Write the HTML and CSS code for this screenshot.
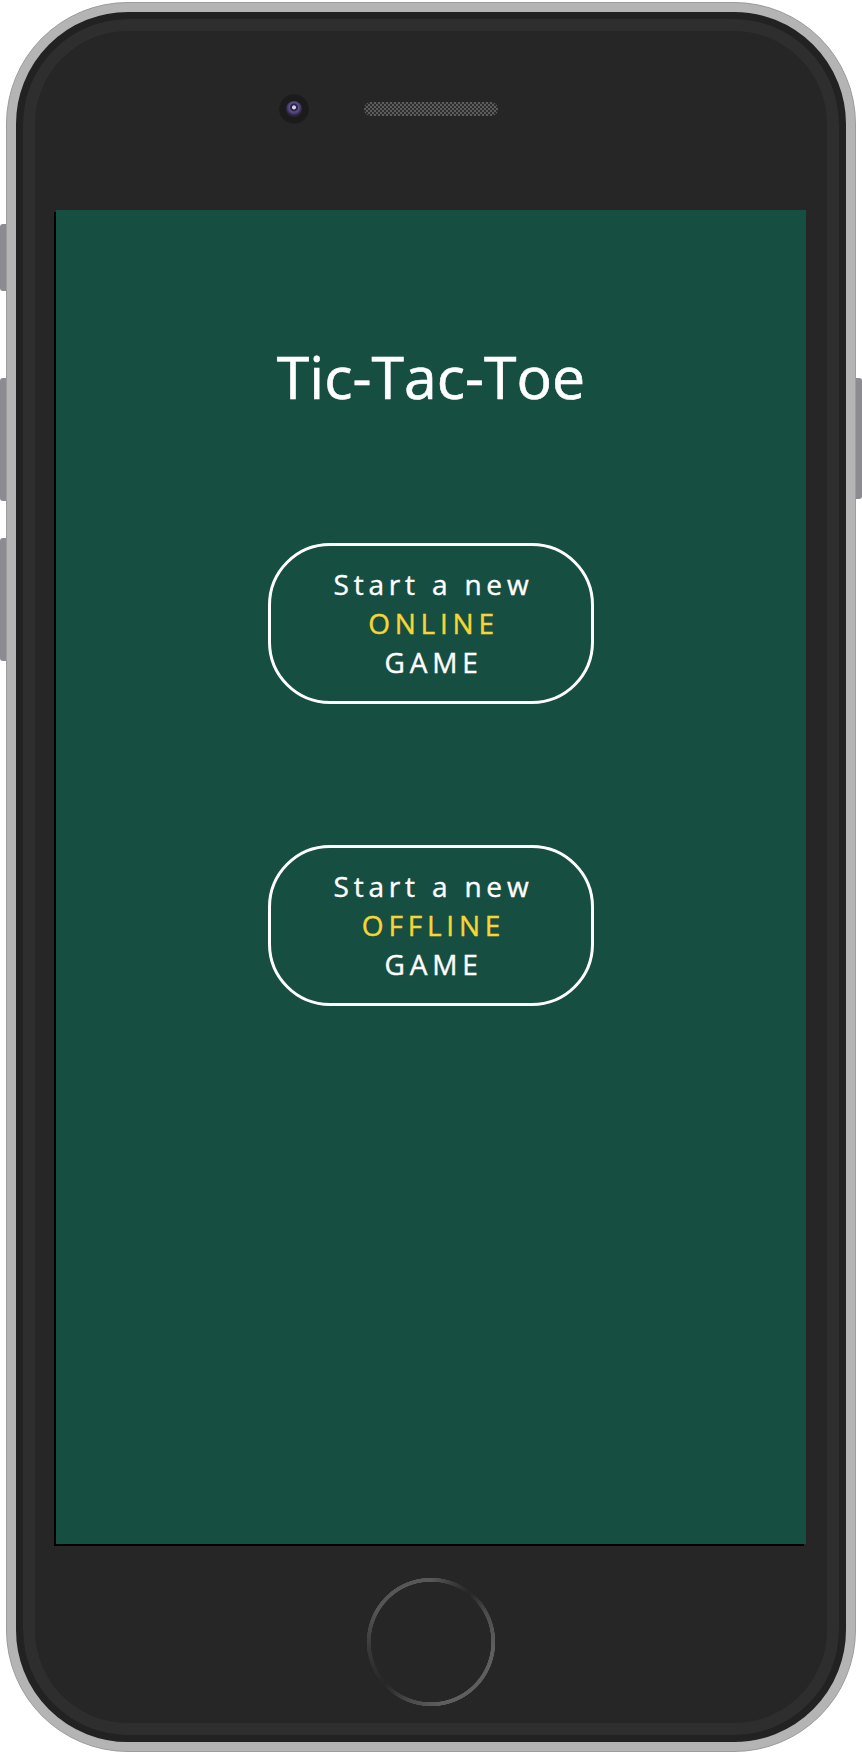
FILE: index.html
```html
<!DOCTYPE html>
<html lang="en">
<head>
<meta charset="utf-8">
<title>Tic-Tac-Toe</title>
<link rel="stylesheet" href="styles.css">
</head>
<body>
<div class="phone">
  <span class="side-btn side-l1"></span>
  <span class="side-btn side-l2"></span>
  <span class="side-btn side-l3"></span>
  <span class="side-btn side-r1"></span>
  <div class="body">
    <div class="top-bezel">
      <div class="cam-slot"><div class="cam"><div class="lens"></div></div></div>
      <div class="speaker"></div>
      <div></div>
    </div>
    <main class="screen">
      <h1 class="title">Tic-Tac-Toe</h1>
      <button class="mode-btn mode-online">
        <span class="line">Start a new</span>
        <span class="line accent">ONLINE</span>
        <span class="line">GAME</span>
      </button>
      <button class="mode-btn mode-offline">
        <span class="line">Start a new</span>
        <span class="line accent">OFFLINE</span>
        <span class="line">GAME</span>
      </button>
    </main>
    <div class="bottom-bezel"><div class="home"></div></div>
  </div>
</div>
</body>
</html>
```

FILE: styles.css
```css
html, body {
  margin: 0;
  padding: 0;
  background: #ffffff;
}

body {
  width: 862px;
  height: 1754px;
  overflow: hidden;
  font-family: "Comic Sans MS", "Open Sans", "DejaVu Sans", sans-serif;
}

.phone {
  position: relative;
  box-sizing: border-box;
  width: 850px;
  height: 1750px;
  margin: 2px 0 0 6px;
  padding: 9px;
  border: 1px solid #9c9c9c;
  border-radius: 122px;
  background: #b4b4b4;
}

.side-btn {
  position: absolute;
  width: 6px;
  background: #8b8b91;
}
.side-l1 { left: -7px; top: 221px; height: 67px; border-radius: 3px 0 0 3px; }
.side-l2 { left: -7px; top: 375px; height: 123px; border-radius: 3px 0 0 3px; }
.side-l3 { left: -7px; top: 535px; height: 123px; border-radius: 3px 0 0 3px; }
.side-r1 { right: -7px; top: 375px; height: 121px; border-radius: 0 3px 3px 0; }

.body {
  box-sizing: border-box;
  height: 100%;
  display: flex;
  flex-direction: column;
  align-items: center;
  border: 7px solid #222222;
  border-radius: 112px;
  background: #262626;
  box-shadow: inset 0 0 0 12px #2e2e2e;
}

.top-bezel {
  box-sizing: border-box;
  width: 100%;
  height: 191px;
  padding-top: 75px;
  display: grid;
  grid-template-columns: 1fr auto 1fr;
  grid-template-rows: 30px;
  align-items: center;
}

.cam-slot {
  display: flex;
  justify-content: flex-end;
  padding-right: 55px;
}

.cam {
  width: 30px;
  height: 30px;
  border-radius: 50%;
  background: radial-gradient(circle, #1b1b1b 60%, #222 100%);
  display: flex;
  align-items: center;
  justify-content: center;
}

.lens {
  width: 16px;
  height: 16px;
  border-radius: 50%;
  background: radial-gradient(circle at 50% 40%, #d8d4e8 0 1.5px, #2c2646 2.5px 3.5px, #5d508c 4.5px, #45396a 6.5px, #2a2535 8px);
}

.speaker {
  width: 134px;
  height: 14px;
  border-radius: 7px;
  background: repeating-conic-gradient(#5c5c5c 0 25%, #2d2d2d 0 50%) 0 0 / 4px 4px;
}

.screen {
  box-sizing: border-box;
  width: 750px;
  height: 1334px;
  flex: none;
  background: #164e42;
  box-shadow: -2px 2px 0 #000;
  display: flex;
  flex-direction: column;
  align-items: center;
  padding-top: 126px;
}

.title {
  margin: 0;
  font-family: "Comic Sans MS", "Open Sans", sans-serif;
  font-weight: 400;
  font-size: 59px;
  line-height: 80px;
  color: #ffffff;
  -webkit-text-stroke: 0.6px #ffffff;
}

.mode-btn {
  box-sizing: border-box;
  width: 326px;
  height: 161px;
  border: 3px solid #ffffff;
  border-radius: 62px;
  background: transparent;
  padding: 0 0 0 5px;
  display: flex;
  flex-direction: column;
  align-items: center;
  justify-content: center;
  font-family: "Comic Sans MS", "Open Sans", sans-serif;
  font-weight: 400;
  font-size: 28px;
  line-height: 39px;
  letter-spacing: 4.8px;
  color: #ffffff;
  -webkit-text-stroke: 0.4px currentColor;
}

.mode-online { margin-top: 127px; }
.mode-offline { margin-top: 141px; }

.line { display: block; }
.accent { color: #f7d634; }

.bottom-bezel {
  width: 100%;
  padding-top: 33px;
  display: flex;
  justify-content: center;
}

.home {
  width: 130px;
  height: 130px;
  border-radius: 50%;
  background: conic-gradient(#585858 0deg, #3c3c3c 20deg, #262626 38deg, #4c4c4c 62deg, #5e5e5e 95deg, #5e5e5e 170deg, #4a4a4a 200deg, #262626 228deg, #383838 262deg, #555555 300deg, #585858 360deg);
  -webkit-mask: radial-gradient(circle, transparent 60px, #000 60.5px, #000 64px, transparent 64.5px);
  mask: radial-gradient(circle, transparent 60px, #000 60.5px, #000 64px, transparent 64.5px);
}
```
